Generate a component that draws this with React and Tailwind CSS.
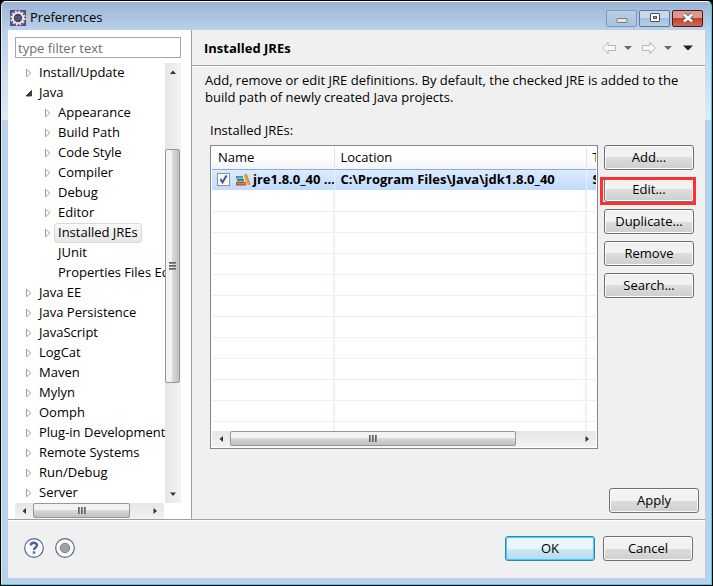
const treeItems = [
  { label: 'Install/Update', level: 0, state: 'closed' },
  { label: 'Java', level: 0, state: 'open' },
  { label: 'Appearance', level: 1, state: 'closed' },
  { label: 'Build Path', level: 1, state: 'closed' },
  { label: 'Code Style', level: 1, state: 'closed' },
  { label: 'Compiler', level: 1, state: 'closed' },
  { label: 'Debug', level: 1, state: 'closed' },
  { label: 'Editor', level: 1, state: 'closed' },
  { label: 'Installed JREs', level: 1, state: 'closed', selected: true },
  { label: 'JUnit', level: 1, state: 'leaf' },
  { label: 'Properties Files Editor', level: 1, state: 'leaf' },
  { label: 'Java EE', level: 0, state: 'closed' },
  { label: 'Java Persistence', level: 0, state: 'closed' },
  { label: 'JavaScript', level: 0, state: 'closed' },
  { label: 'LogCat', level: 0, state: 'closed' },
  { label: 'Maven', level: 0, state: 'closed' },
  { label: 'Mylyn', level: 0, state: 'closed' },
  { label: 'Oomph', level: 0, state: 'closed' },
  { label: 'Plug-in Development', level: 0, state: 'closed' },
  { label: 'Remote Systems', level: 0, state: 'closed' },
  { label: 'Run/Debug', level: 0, state: 'closed' },
  { label: 'Server', level: 0, state: 'closed' },
]

const emptyRows = Array.from({ length: 12 })

function EclipseIcon() {
  return (
    <svg width="16" height="16" viewBox="0 0 16 16" className="shrink-0">
      <rect width="16" height="16" fill="#5b4a86" />
      <circle cx="8" cy="8" r="6.6" fill="none" stroke="#e8e4e0" strokeWidth="2" strokeDasharray="2 1.46" />
      <circle cx="8" cy="8" r="5.2" fill="#4a4163" stroke="#f2efea" strokeWidth="1.8" />
      <path d="M4.5 7h7M4.5 9h7" stroke="#75708a" strokeWidth="0.8" />
    </svg>
  )
}

// stack of library books with one leaning on the right
function BooksIcon() {
  return (
    <svg width="16" height="14" viewBox="0 0 16 14" className="shrink-0">
      <path d="M1 3h7v2.500H1z" fill="#2f7a9c" />
      <path d="M2 4.200h6" stroke="#9fd0d8" strokeWidth="0.8" />
      <path d="M2 6h7v2.500H2z" fill="#3f8f72" />
      <path d="M1 9h10v3.500H1z" fill="#b5562f" />
      <path d="M2 10.700h9" stroke="#d99a78" strokeWidth="0.8" />
      <path d="M8.500 2l2.800-1.300L15 11.500l-2.500 1z" fill="#eda52f" />
      <path d="M11.300 0.700L15 11.500" stroke="#b87716" strokeWidth="0.8" />
    </svg>
  )
}

function Arrow({ dir }) {
  const paths = {
    up: 'M1 6L4 2.500L7 6z',
    down: 'M1 2.500L4 6L7 2.500z',
    left: 'M6 1L2.500 4L6 7z',
    right: 'M2.500 1L6 4L2.500 7z',
  }
  return (
    <svg width="8" height="8" viewBox="0 0 8 8">
      <path d={paths[dir]} fill="#333" />
    </svg>
  )
}

function Expander({ state }) {
  if (state === 'leaf') return <span className="w-[8px] shrink-0" />
  return (
    <svg width="8" height="10" viewBox="0 0 8 10" className="shrink-0">
      {state === 'open' ? (
        <path d="M6.500 2.500v5.500H1z" fill="#404040" stroke="#262626" strokeWidth="0.8" />
      ) : (
        <path d="M1.500 1.200v7.600L5.800 5z" fill="#fff" stroke="#a0a0a0" />
      )}
    </svg>
  )
}

function HScroll({ thumb }) {
  return (
    <div className="flex items-center bg-gradient-to-b from-[#e6e6e6] to-[#f2f2f2] h-[16px]">
      <button aria-label="Scroll left" className="w-[18px] h-full flex items-center justify-center">
        <Arrow dir="left" />
      </button>
      <div className="flex-1 h-full flex">
        <div className={`${thumb} h-[15px] flex items-center justify-center gap-px rounded-[2px] border border-[#979797] bg-gradient-to-b from-[#f3f3f3] from-45% via-[#d9d9dc] via-50% to-[#c0c0c5]`}>
          <span className="w-[2px] h-[7px] bg-gradient-to-r from-[#555] to-[#999]" />
          <span className="w-[2px] h-[7px] bg-gradient-to-r from-[#555] to-[#999]" />
          <span className="w-[2px] h-[7px] bg-gradient-to-r from-[#555] to-[#999]" />
        </div>
      </div>
      <button aria-label="Scroll right" className="w-[18px] h-full flex items-center justify-center">
        <Arrow dir="right" />
      </button>
    </div>
  )
}

function VScroll() {
  return (
    <div className="w-[16px] flex flex-col bg-gradient-to-r from-[#e6e6e6] to-[#f2f2f2]">
      <button aria-label="Scroll up" className="h-[18px] flex items-center justify-center">
        <Arrow dir="up" />
      </button>
      <div className="flex-1 pt-[68px]">
        <div className="w-[15px] h-[234px] flex flex-col items-center justify-center gap-px rounded-[2px] border border-[#979797] bg-gradient-to-r from-[#f3f3f3] from-45% via-[#d9d9dc] via-50% to-[#c0c0c5]">
          <span className="h-[2px] w-[7px] bg-gradient-to-b from-[#555] to-[#999]" />
          <span className="h-[2px] w-[7px] bg-gradient-to-b from-[#555] to-[#999]" />
          <span className="h-[2px] w-[7px] bg-gradient-to-b from-[#555] to-[#999]" />
        </div>
      </div>
      <button aria-label="Scroll down" className="h-[18px] flex items-center justify-center">
        <Arrow dir="down" />
      </button>
    </div>
  )
}

function PushButton({ children, primary }) {
  const look = primary
    ? 'border-[#2f86b8] shadow-[inset_0_0_0_1px_#3fd0fa] from-[#e9f6fd] via-[#cfe8f5] to-[#b4d9ec]'
    : 'border-[#707070] shadow-[inset_0_0_0_1px_#fafafa] from-[#f2f2f2] via-[#dddddd] to-[#cfcfcf]'
  return (
    <button className={`w-[90px] h-[25px] shrink-0 rounded-[3px] border bg-gradient-to-b from-50% via-50% text-center leading-[23px] ${look}`}>
      {children}
    </button>
  )
}

function TitleBar() {
  return (
    <header className="h-[28px] flex items-center pt-[4px] pl-[2px] pr-[2px] text-black">
      <EclipseIcon />
      <h1 className="pl-[4px] flex-1">Preferences</h1>
      <div className="flex gap-[2px]">
        <button aria-label="Minimize" className="w-[31px] h-[17px] flex items-center justify-center rounded-[2px] border border-[#7f98b8] bg-gradient-to-b from-[#b9cde4] to-[#a9c2de]">
          <svg width="12" height="12" viewBox="0 0 12 12">
            <rect x="1" y="6.500" width="10" height="4" rx="0.5" fill="#e6e6e6" stroke="#7b7b80" />
          </svg>
        </button>
        <button aria-label="Maximize" className="w-[31px] h-[17px] flex items-center justify-center rounded-[2px] border border-[#5f7597] bg-gradient-to-b from-[#c8d9ec] from-50% via-[#a5bfdd] via-50% to-[#b8d0ea]">
          <svg width="12" height="12" viewBox="0 0 12 12">
            <rect x="1.500" y="1.500" width="9" height="8" rx="0.5" fill="#fff" stroke="#4a5066" />
            <rect x="4.500" y="4.500" width="3" height="2" fill="#9db5d2" stroke="#4a5066" />
          </svg>
        </button>
        <button aria-label="Close" className="w-[31px] h-[17px] flex items-center justify-center rounded-[2px] border border-[#4c1622] bg-gradient-to-b from-[#dc9a8b] from-50% via-[#bf4030] via-50% to-[#cf6a4e]">
          <svg width="12" height="12" viewBox="0 0 12 12">
            <path d="M2 2.500l8 7M10 2.500l-8 7" stroke="#5f5f70" strokeWidth="4.400" />
            <path d="M2 2.500l8 7M10 2.500l-8 7" stroke="#fff" strokeWidth="2.600" />
          </svg>
        </button>
      </div>
    </header>
  )
}

function TreePane() {
  return (
    <nav className="w-[183px] shrink-0 bg-white pt-[7px] pl-[7px] pr-[10px] flex flex-col">
      <input
        aria-label="Filter"
        placeholder="type filter text"
        className="h-[21px] w-full border border-[#a5a5ab] px-[2px] placeholder:text-[#6d6d6d] outline-none"
      />
      <div className="flex mt-[5px] flex-1">
        <div className="flex-1 min-w-0 overflow-hidden">
          <ul>
            {treeItems.map((item) => (
              <li key={item.label} className={`h-[20px] flex items-center whitespace-nowrap ${item.level ? 'pl-[29px]' : 'pl-[10px]'}`}>
                <Expander state={item.state} />
                <span
                  className={`ml-[2px] px-[3px] h-[20px] leading-[17px] border rounded-[3px] ${
                    item.selected ? 'border-[#d9d9d9] bg-gradient-to-b from-[#fafafa] to-[#e6e6e6]' : 'border-transparent'
                  }`}
                >
                  {item.label}
                </span>
              </li>
            ))}
          </ul>
        </div>
        <VScroll />
      </div>
      <div className="pr-[17px]">
        <HScroll thumb="w-[97px]" />
      </div>
    </nav>
  )
}

function HistoryArrow({ back }) {
  return (
    <svg width="16" height="14" viewBox="0 0 16 14">
      <path
        d={back ? 'M1.500 7L7 1.500V4.500H14.500V9.500H7V12.500z' : 'M14.500 7L9 1.500V4.500H1.500V9.500H9V12.500z'}
        fill="#f8f8f8"
        stroke="#b4b4b4"
      />
    </svg>
  )
}

function Caret({ menu }) {
  return (
    <svg width="10" height="6" viewBox="0 0 10 6">
      {menu ? <path d="M0 0.500h10L5 5.500z" fill="#2b1748" /> : <path d="M1 1h8L5 5z" fill="#6b6b6b" />}
    </svg>
  )
}

function PageHeader() {
  return (
    <div className="h-[36px] flex items-center pl-[12px] pr-[12px] border-b border-[#a0a0a0] shadow-[0_1px_0_#fff]">
      <h2 className="flex-1 font-bold pt-[2px]">Installed JREs</h2>
      <div className="flex items-center">
        <button aria-label="Back"><HistoryArrow back /></button>
        <button aria-label="Back history" className="ml-[6px]"><Caret /></button>
        <button aria-label="Forward" className="ml-[8px]"><HistoryArrow /></button>
        <button aria-label="Forward history" className="ml-[6px]"><Caret /></button>
        <button aria-label="Page menu" className="ml-[10px]"><Caret menu /></button>
      </div>
    </div>
  )
}

function JreTable() {
  return (
    <div className="flex-1 min-w-0 h-[304px] border border-[#828790] bg-white p-px flex flex-col">
      <div className="flex-1 min-h-0 overflow-hidden">
        <table className="w-full table-fixed border-collapse text-left">
          <colgroup>
            <col className="w-[122px]" />
            <col className="w-[252px]" />
            <col />
          </colgroup>
          <thead>
            <tr className="h-[22px] bg-gradient-to-b from-white from-45% to-[#f3f4f6]">
              <th className="font-normal p-0 pl-[6px] border-r border-[#e0e3e8]">Name</th>
              <th className="font-normal p-0 pl-[6px] border-r border-[#e0e3e8]">Location</th>
              <th className="font-normal p-0 pl-[6px] overflow-hidden whitespace-nowrap">Type</th>
            </tr>
          </thead>
          <tbody>
            <tr className="h-[21px] font-bold bg-gradient-to-b from-[#dcebfd] to-[#c1dbfc] border-t border-[#84acdd]">
              <td className="p-0 pl-[5px] border-r border-r-[#eaf0fb]">
                <div className="flex items-center whitespace-nowrap overflow-hidden">
                  <span className="grid shrink-0">
                    <input
                      type="checkbox"
                      defaultChecked
                      aria-label="jre1.8.0_40"
                      className="col-start-1 row-start-1 appearance-none w-[13px] h-[13px] border border-[#8e8f8f] bg-[#f4f4f4] shadow-[inset_0_0_0_1px_#fff]"
                    />
                    <svg width="13" height="13" viewBox="0 0 13 13" className="col-start-1 row-start-1 pointer-events-none">
                      <path d="M3.500 6l2 3.500L9.500 2.500" fill="none" stroke="#3f4f8f" strokeWidth="1.800" />
                    </svg>
                  </span>
                  <span className="ml-[5px]"><BooksIcon /></span>
                  <span className="ml-[2px]">jre1.8.0_40 ...</span>
                </div>
              </td>
              <td className="p-0 pl-[6px] border-r border-r-[#eaf0fb] whitespace-nowrap">C:\Program Files\Java\jdk1.8.0_40</td>
              <td className="p-0 pl-[6px] overflow-hidden whitespace-nowrap">S</td>
            </tr>
            {emptyRows.map((_, i) => (
              <tr key={i} className="h-[21px] border-b border-[#efefef]">
                <td className="p-0 border-r-2 border-r-[#eaf0fb]" />
                <td className="p-0 border-r-2 border-r-[#eaf0fb]" />
                <td className="p-0" />
              </tr>
            ))}
          </tbody>
        </table>
      </div>
      <HScroll thumb="w-[286px]" />
    </div>
  )
}

function JrePage() {
  return (
    <main className="flex-1 min-w-0 flex flex-col border-l border-[#a0a0a0]">
      <PageHeader />
      <div className="flex-1 flex flex-col pt-[6px] pl-[13px] pr-[6px] pb-[6px]">
        <p className="leading-[17px] pr-[20px]">
          Add, remove or edit JRE definitions. By default, the checked JRE is added to the build path of newly created Java projects.
        </p>
        <div className="pl-[5px] pr-[5px] flex flex-col">
          <div className="mt-[15px] h-[24px] leading-[19px]">Installed JREs:</div>
          <div className="flex gap-[6px]">
            <JreTable />
            <div className="flex flex-col gap-[7px]">
              <PushButton>Add...</PushButton>
              <div className="relative">
                <PushButton>Edit...</PushButton>
                <div className="absolute -left-[4px] -right-[2px] top-0 -bottom-[3px] border-3 border-[#fb3232] pointer-events-none" />
              </div>
              <PushButton>Duplicate...</PushButton>
              <PushButton>Remove</PushButton>
              <PushButton>Search...</PushButton>
            </div>
          </div>
        </div>
        <div className="mt-auto flex justify-end">
          <PushButton>Apply</PushButton>
        </div>
      </div>
    </main>
  )
}

function Footer() {
  return (
    <footer className="flex-1 flex items-center border-t border-[#a0a0a0] shadow-[inset_0_1px_0_#fff] pl-[16px] pr-[12px] pb-[2px]">
      <button aria-label="Help">
        <svg width="20" height="20" viewBox="0 0 20 20">
          <circle cx="10" cy="10" r="9.300" fill="#f8f9fb" stroke="#5a6a8c" strokeWidth="1.200" />
          <path d="M6.800 7.600C6.800 3.800 13 4 13 7.300C13 9.500 10 9.500 10 12" fill="none" stroke="#4d6394" strokeWidth="2.400" />
          <rect x="8.800" y="13.300" width="2.400" height="2.400" fill="#4d6394" />
        </svg>
      </button>
      <button aria-label="Record" className="ml-[11px]">
        <svg width="20" height="20" viewBox="0 0 20 20">
          <circle cx="10" cy="10" r="9.300" fill="#f8f9fb" stroke="#5a6a8c" strokeWidth="1.200" />
          <circle cx="10" cy="10" r="4.700" fill="#a2a2a2" stroke="#7d7d7d" />
        </svg>
      </button>
      <div className="ml-auto flex gap-[8px]">
        <PushButton primary>OK</PushButton>
        <PushButton>Cancel</PushButton>
      </div>
    </footer>
  )
}

export default function App() {
  return (
    <div className="min-h-screen flex bg-black p-px text-[13px] text-black font-['Open_Sans','Noto_Sans',sans-serif]">
      <div className="flex-1 min-w-0 flex flex-col rounded-t-[5px] border border-t-white border-l-[#dbe8f5] border-r-[#35d0ec] border-b-[#35d0ec] bg-[linear-gradient(#9ab5d5,#b9d1ea_28px,#dfeaf6_118px,#b9d1ea_118px)] px-[6px] pb-[6px]">
        <TitleBar />
        <div className="flex-1 flex flex-col bg-[#f0f0f0]">
          <div className="flex">
            <TreePane />
            <JrePage />
          </div>
          <Footer />
        </div>
      </div>
    </div>
  )
}
